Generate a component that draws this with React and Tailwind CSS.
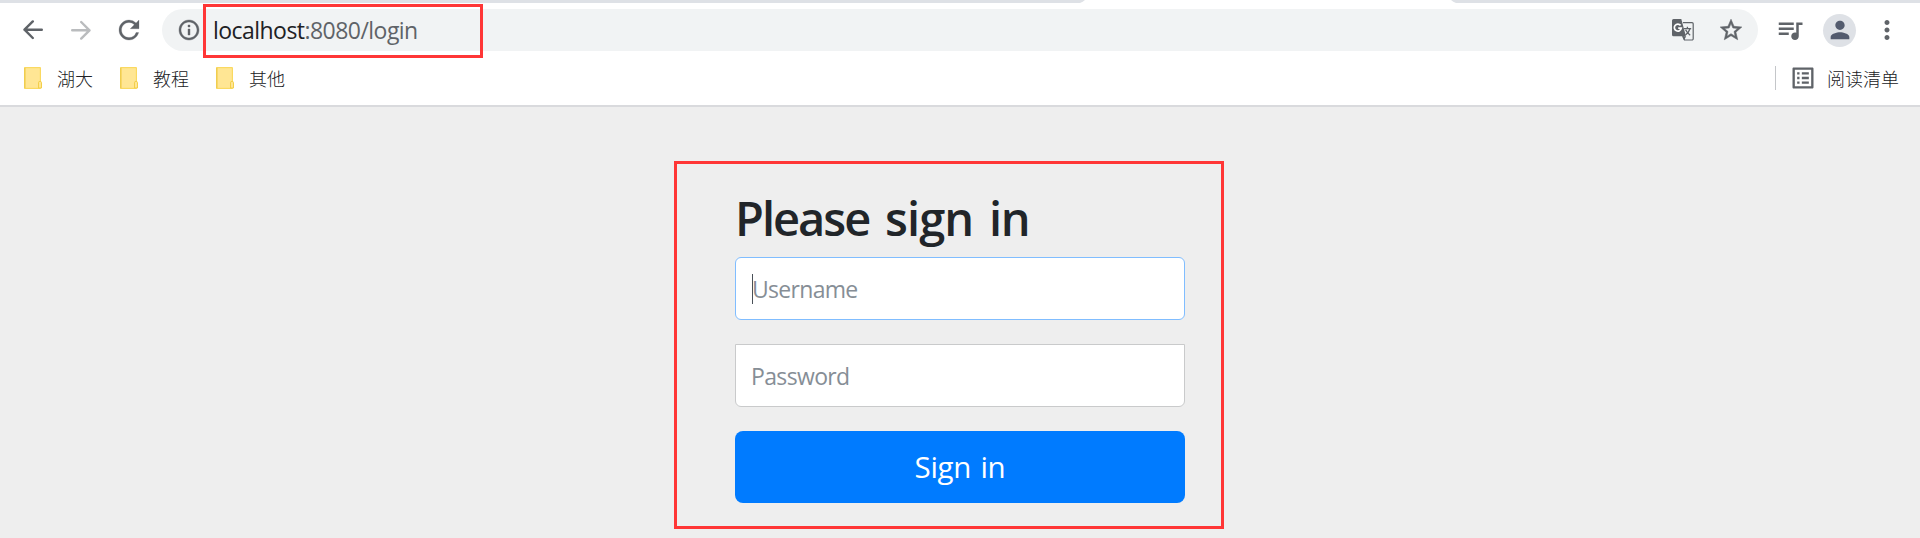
import React from "react";
import {
  MdRefresh, MdInfoOutline, MdStarBorder, MdQueueMusic, MdPerson, MdMoreVert, MdOutlineListAlt,
} from "react-icons/md";

function Arrow({ className }) {
  return (
    <svg viewBox="0 0 20 20" className={`h-5 w-5 shrink-0 ${className}`} fill="none" stroke="currentColor" strokeWidth="2.4" strokeLinecap="round" strokeLinejoin="round">
      <path d="M18.8 9.7H1.6M9.8 1.4 1.5 9.7l8.3 8.3" />
    </svg>
  );
}

function TranslateIcon({ className }) {
  return (
    <svg viewBox="0 0 22 22" className={className} fill="none">
      <path d="M11 3.6h9a1.2 1.2 0 0 1 1.2 1.2v15a1.2 1.2 0 0 1-1.2 1.2h-7.5L11 17" stroke="currentColor" strokeWidth="1.2" />
      <path d="M1.5 0h7.8l4.6 17.2H1.5A1.5 1.5 0 0 1 0 15.7V1.5A1.5 1.5 0 0 1 1.5 0z" fill="currentColor" />
      <path d="m10 17.2 2 4 2.2-4z" fill="currentColor" />
      <path d="M8.6 6.4A3.5 3.5 0 1 0 9.3 9.2H6.2" stroke="#fff" strokeWidth="1.7" />
      <path d="M11.8 9.6h7.4M15.4 7.8v1.8M18 9.8c-.7 2.4-2.3 4.5-4.6 6.2M13.6 10.8c1 2.2 2.6 4 4.6 5.4" stroke="currentColor" strokeWidth="1.3" />
    </svg>
  );
}

function Bookmark({ label }) {
  return (
    <div className="flex h-6 w-24 items-center">
      <svg viewBox="0 0 18 22" className="h-[22px] w-[18px] shrink-0">
        <rect x="0" y="0" width="17" height="22" rx="1" fill="#fad961" />
        <rect x="1.5" y="1.2" width="14.3" height="19.6" fill="#ffe694" />
        <path d="M0 .8h1.4v20.4H0z" fill="#efcd50" />
        <path d="M14.5 21v-5.2a1.5 1.5 0 0 1 3 0V21z" fill="#ffe694" stroke="#f3cf4a" strokeWidth="1" />
      </svg>
      <span className="ml-[15px] pt-px text-lg leading-6 font-light text-[#202124]">{label}</span>
    </div>
  );
}

export default function App() {
  return (
    <div className="relative flex h-[538px] w-[1920px] flex-col overflow-hidden bg-[#eeeeee] font-['Open_Sans','Noto_Sans_CJK_SC',sans-serif]">
      <header className="flex h-[107px] shrink-0 flex-col border-b-2 border-[#d9dadd] bg-white">
        <div className="flex h-[3px] justify-between">
          <svg viewBox="0 0 1085 3" className="h-[3px] w-[1085px]"><path d="M0 0h1085q-2 2-5 3H0z" fill="#dee1e6" /></svg>
          <svg viewBox="0 0 469 3" className="h-[3px] w-[469px]"><path d="M0 0h469v3H5Q2 2 0 0z" fill="#dee1e6" /></svg>
        </div>
        <div className="flex h-[54px] items-center pl-[23px] text-[#5f6368]">
          <Arrow />
          <Arrow className="ml-7 rotate-180 text-[#babcbe]" />
          <MdRefresh className="ml-[23px] size-[30px] shrink-0 [&>path:last-child]:stroke-current [&>path:last-child]:[stroke-width:0.2]" />
          <div className="ml-[18px] flex h-[42px] w-[1596px] shrink-0 items-center rounded-full bg-[#f1f3f4] pr-[14px] pl-[15px]">
            <MdInfoOutline className="size-6 shrink-0 [&>path:last-child]:stroke-current [&>path:last-child]:[stroke-width:0.4]" />
            <span className="ml-[12px] text-[23px] leading-[30px] tracking-[-0.54px]">
              <span className="text-[#202124]">localhost</span>:8080/login
            </span>
            <TranslateIcon className="ml-auto size-[22px] shrink-0" />
            <MdStarBorder className="ml-[24px] size-[26px] shrink-0 [&>path:last-child]:stroke-current [&>path:last-child]:[stroke-width:0.5]" />
          </div>
          <MdQueueMusic className="ml-[17px] size-[30px] shrink-0" />
          <div className="ml-[18px] flex size-[33px] shrink-0 items-center justify-center rounded-full bg-[#dee1e6]">
            <MdPerson className="size-7 text-[#535b6e]" />
          </div>
          <MdMoreVert className="ml-4 size-[30px] shrink-0" />
        </div>
        <nav className="flex h-[42px] items-center pl-6">
          <Bookmark label="湖大" />
          <Bookmark label="教程" />
          <Bookmark label="其他" />
          <div className="ml-auto flex h-6 items-center border-l border-[#c4c6c9] pr-[21px] pl-[13px]">
            <MdOutlineListAlt className="size-7 text-[#5f6368]" />
            <span className="ml-[10px] pt-[2px] text-lg leading-6 font-light text-[#202124]">阅读清单</span>
          </div>
        </nav>
      </header>
      <main className="ml-[674px] mt-[54px] flex h-[368px] w-[550px] flex-col border-3 border-[#ff3636] px-[58px] pt-[25px]">
        <h2 className="h-[68px] text-[47px] leading-[58px] font-semibold tracking-[-1.5px] [word-spacing:5px] whitespace-nowrap text-[#212529]"><span className="tracking-[-2px]">Please</span> <span className="tracking-[-0.9px]">sign</span> <span>in</span></h2>
        <div className="flex h-[63px] w-[450px] shrink-0 items-center rounded-md border border-[#80bdff] bg-white pl-[16px] text-[23px] tracking-[-0.7px] text-[#868e96]">
          <span className="h-[30px] w-px bg-[#495057]" />
          <span className="-ml-px pt-[2px]">Username</span>
        </div>
        <div className="mt-6 flex h-[63px] w-[450px] shrink-0 items-center rounded-b-md border border-[#c9cacb] bg-white pl-[15px] text-[23px] tracking-[-0.64px] text-[#868e96]">
          <span className="pt-[2px]">Password</span>
        </div>
        <button className="mt-6 h-[72px] w-[450px] shrink-0 rounded-lg bg-[#007bff] text-[29.5px] tracking-[-0.3px] [word-spacing:2px] text-white"><span>Sign in</span></button>
      </main>
      <div className="absolute top-[4px] left-[203px] h-[54px] w-[280px] border-3 border-[#ff3636]" />
    </div>
  );
}
